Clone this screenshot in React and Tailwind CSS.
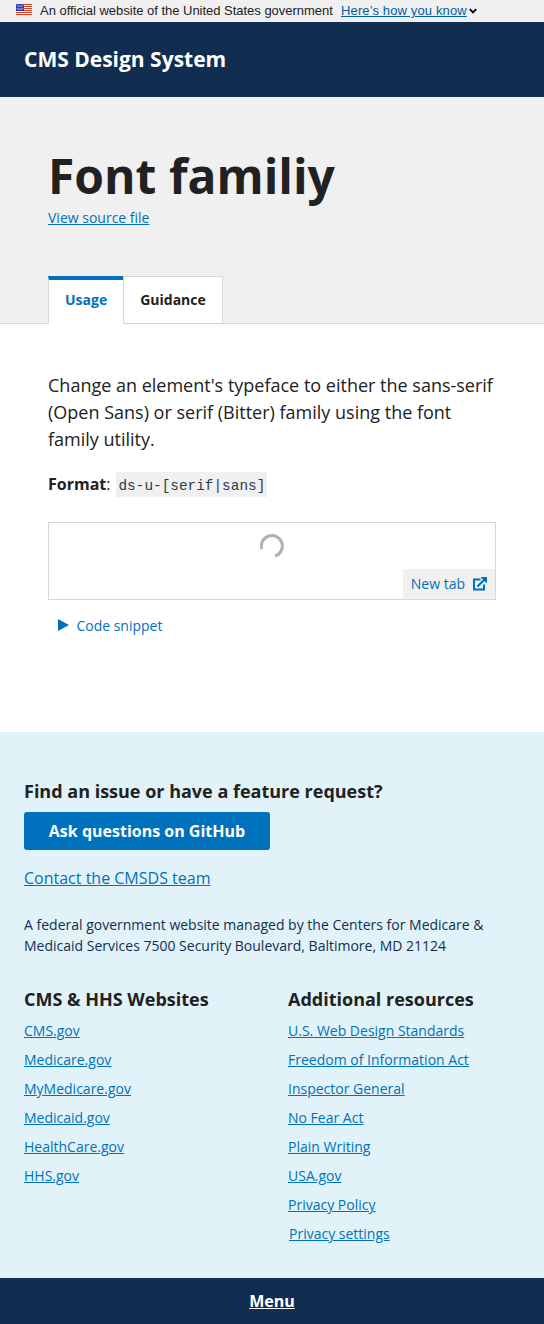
const sites = ["CMS.gov", "Medicare.gov", "MyMedicare.gov", "Medicaid.gov", "HealthCare.gov", "HHS.gov"];
const resources = [
  "U.S. Web Design Standards",
  "Freedom of Information Act",
  "Inspector General",
  "No Fear Act",
  "Plain Writing",
  "USA.gov",
  "Privacy Policy",
];

function Flag() {
  const stars = [
    [1, 1], [3, 1], [5, 1], [7, 1],
    [2, 2.6], [4, 2.6], [6, 2.6],
    [1, 4.2], [3, 4.2], [5, 4.2], [7, 4.2],
    [2, 5.6], [4, 5.6], [6, 5.6],
  ];
  return (
    <svg width="16" height="11" viewBox="0 0 16 11" className="mb-[3px] shrink-0">
      <rect width="16" height="11" fill="#fff" />
      {[0, 2, 4, 6, 8, 10].map((y) => (
        <rect key={y} y={y} width="16" height="1" fill="#db3e1f" />
      ))}
      <rect width="8" height="7" fill="#1e33b1" />
      {stars.map(([x, y]) => (
        <circle key={`${x}-${y}`} cx={x} cy={y} r="0.5" fill="#fff" />
      ))}
    </svg>
  );
}

function LinkColumn({ title, links, children }) {
  return (
    <div>
      <h2 className="text-[18px] leading-[23px] font-bold">{title}</h2>
      <ul className="mt-[9px] flex flex-col gap-2 text-[14px] leading-[21px] text-[#0071bc]">
        {links.map((l) => (
          <li key={l}>
            <a className="underline">{l}</a>
          </li>
        ))}
        {children}
      </ul>
    </div>
  );
}

export default function App() {
  return (
    <div className="flex h-[1324px] w-[544px] flex-col bg-white font-['Open_Sans',sans-serif] text-[#212121]">
      <div className="flex h-[22px] items-center bg-[#f0f0f0] pl-4 font-['Liberation_Sans',sans-serif] text-[13px] leading-[18px]">
        <Flag />
        <span className="ml-2 w-[293px] whitespace-nowrap tracking-[-0.02px]">An official website of the United States government</span>
        <a className="ml-2 whitespace-nowrap tracking-[0.13px] text-[#005ea2] underline">Here’s how you know</a>
        <svg width="8" height="6" viewBox="0 0 8 6" className="ml-[2px]" fill="none" stroke="#000" strokeWidth="1.9">
          <path d="M0.8 1.1 4 4.3 7.2 1.1" />
        </svg>
      </div>
      <header className="flex h-[75px] items-center bg-[#112e51] px-6">
        <span className="text-[21px] leading-[27px] font-bold text-white">CMS Design System</span>
      </header>
      <section className="flex h-[227px] flex-col border-b border-[#d6d7d9] bg-[#f0f0f0] px-12">
        <h1 className="mt-[48px] text-[48px] leading-[62px] font-bold">Font familiy</h1>
        <a className="text-[14px] leading-[21px] text-[#0071bc] underline">View source file</a>
        <div className="mt-auto -mb-px flex text-[14px] leading-[21px] font-bold">
          <div className="h-12 border-t-4 border-l border-[#d6d7d9] border-t-[#0071bc] bg-white px-4 pt-[9px] text-[#0071bc]">Usage</div>
          <div className="h-12 border border-[#d6d7d9] bg-white px-4 pt-[12px]">Guidance</div>
        </div>
      </section>
      <main className="flex h-[408px] flex-col px-12 pt-12">
        <p className="text-[18px] leading-[27px]">
          Change an element's typeface to either the sans-serif (Open Sans) or serif (Bitter) family using the font family utility.
        </p>
        <p className="mt-[19px] flex h-[25px] text-[16px] leading-[24px]">
          <span>
            <strong>Format</strong>:
          </span>
          <code className="ml-[6px] h-[25px] w-[151px] bg-[#f0f0f0] px-[2px] pt-px font-['Liberation_Mono',monospace] text-[14.4px] leading-[26px] whitespace-nowrap text-[#323a45]">ds-u-[serif|sans]</code>
        </p>
        <div className="mt-[25px] flex h-[78px] flex-col items-center border border-[#d6d7d9] pt-[11px]">
          <svg width="24" height="24" viewBox="0 0 24 24" fill="none" stroke="#aeb0b5" strokeWidth="3">
            <path d="M1.8 15.1A10.5 10.5 0 1 1 15.2 22" />
          </svg>
          <a className="mt-auto flex h-[30px] items-center self-end bg-[#f0f0f0] pr-2 pl-2 text-[14px] leading-[21px] text-[#0071bc]">
            <span className="mb-px">New tab</span>
            <svg width="14" height="14" viewBox="0 0 14 14" className="ml-2" fill="none" stroke="currentColor" strokeWidth="2">
              <path d="M7.5 2.5H1V12.5h10V7.5M4.5 9.5 11.5 2.5" />
              <path d="M7.5 0H14v6.5z" fill="currentColor" stroke="none" />
            </svg>
          </a>
        </div>
        <div className="mt-[15px] flex items-center pl-[10px] text-[14px] leading-[21px] text-[#0071bc]">
          <svg width="11" height="12" viewBox="0 0 11 12" className="mb-[2px]" fill="currentColor">
            <path d="M0 0 11 6 0 12z" />
          </svg>
          <span className="ml-[7.4px]">Code snippet</span>
        </div>
      </main>
      <footer className="flex h-[546px] flex-col items-start bg-[#e1f3f8] px-6 pt-12">
        <h2 className="text-[18px] leading-[23px] font-bold">Find an issue or have a feature request?</h2>
        <button className="mt-[9px] h-[38px] w-[246px] rounded-[3px] bg-[#0071bc] text-[16px] leading-[24px] font-bold text-white">Ask questions on GitHub</button>
        <a className="mt-4 text-[16px] leading-[24px] text-[#0071bc] underline">Contact the CMSDS team</a>
        <p className="mt-6 text-[14px] leading-[21px] text-[#112e51]">
          A federal government website managed by the Centers for Medicare &amp; Medicaid Services 7500 Security Boulevard, Baltimore, MD 21124
        </p>
        <div className="mt-8 grid w-full grid-cols-2 gap-8">
          <LinkColumn title="CMS & HHS Websites" links={sites} />
          <LinkColumn title="Additional resources" links={resources}>
            <li className="pl-px">
              <a className="underline">Privacy settings</a>
            </li>
          </LinkColumn>
        </div>
      </footer>
      <nav className="flex h-[46px] items-center justify-center bg-[#112e51] text-[16px] font-bold text-white">
        <a className="underline">Menu</a>
      </nav>
    </div>
  );
}
